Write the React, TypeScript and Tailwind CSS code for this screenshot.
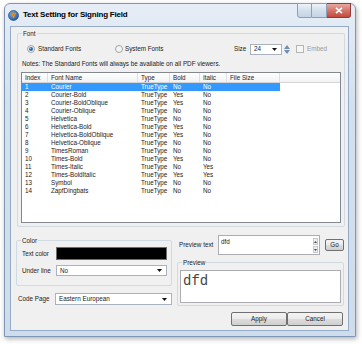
import React from 'react';

const fonts = [
  ['1', 'Courier', 'No', 'No'],
  ['2', 'Courier-Bold', 'Yes', 'No'],
  ['3', 'Courier-BoldOblique', 'Yes', 'No'],
  ['4', 'Courier-Oblique', 'No', 'No'],
  ['5', 'Helvetica', 'No', 'No'],
  ['6', 'Helvetica-Bold', 'Yes', 'No'],
  ['7', 'Helvetica-BoldOblique', 'Yes', 'No'],
  ['8', 'Helvetica-Oblique', 'No', 'No'],
  ['9', 'TimesRoman', 'No', 'No'],
  ['10', 'Times-Bold', 'Yes', 'No'],
  ['11', 'Times-Italic', 'No', 'Yes'],
  ['12', 'Times-BoldItalic', 'Yes', 'Yes'],
  ['13', 'Symbol', 'No', 'No'],
  ['14', 'ZapfDingbats', 'No', 'No'],
];

function DownArrow() {
  return (
    <svg width="5" height="3" viewBox="0 0 5 3" className="shrink-0">
      <polygon points="0,0 5,0 2.5,3" fill="#111" />
    </svg>
  );
}

function Radio({ on }: { on?: boolean }) {
  return (
    <svg width="8" height="8" viewBox="0 0 8 8" className="shrink-0">
      <circle cx="4" cy="4" r="3.5" fill="#f4f4f4" stroke="#8e8f8f" strokeWidth="0.8" />
      {on && <circle cx="4" cy="4" r="2" fill="#2d64a8" />}
      {on && <circle cx="3.4" cy="3.4" r="0.8" fill="#8fc1f0" />}
    </svg>
  );
}

function Combo({ text, className }: { text: string; className: string }) {
  return (
    <div className={`flex items-center justify-between border border-[#a9b3bf] bg-white pl-[3px] pr-[4px] ${className}`}>
      <span>{text}</span>
      <DownArrow />
    </div>
  );
}

function Btn({ label, className }: { label: string; className: string }) {
  return (
    <div
      className={`flex items-center justify-center rounded-[2px] border border-[#707070] bg-[linear-gradient(#f3f3f3_0%,#ebebeb_50%,#dddddd_51%,#cfcfcf_100%)] ${className}`}
    >
      {label}
    </div>
  );
}

function GroupLabel({ text }: { text: string }) {
  return (
    <span className="absolute left-[4px] top-[-5px] bg-[#f0f0f0] px-[1px] leading-[9px]">{text}</span>
  );
}

export default function App() {
  return (
    <div className="h-[344px] w-[362px] overflow-hidden bg-white pl-[4px] pt-[3px] font-['Liberation_Sans',Arial,sans-serif] text-[6.3px] text-[#222]">
      <div className="relative flex h-[334px] w-[352px] flex-col rounded-t-[6px] border border-[#7d97b5] bg-[linear-gradient(#e6edf6,#d3e0ef_30%,#cfdcec)] shadow-[1px_2px_5px_rgba(0,0,0,0.3)]">
        {/* title bar */}
        <div className="flex h-[22px] shrink-0 items-center pl-[3px]">
          <svg width="11" height="11" viewBox="0 0 11 11">
            <defs>
              <radialGradient id="ig" cx="0.4" cy="0.35" r="0.7">
                <stop offset="0" stopColor="#7fb6f0" />
                <stop offset="1" stopColor="#1c4f9c" />
              </radialGradient>
            </defs>
            <circle cx="5.5" cy="5.5" r="5" fill="url(#ig)" stroke="#173f7a" strokeWidth="0.6" />
            <path d="M3 2.6 L5.6 8.6 L8.2 2.6 L6.9 2.6 L5.6 6 L4.3 2.6 Z" fill="#f5a623" stroke="#b86a0c" strokeWidth="0.4" />
          </svg>
          <span className="ml-[4px] text-[8px] font-bold tracking-[-0.2px] text-black">Text Setting for Signing Field</span>
        </div>
        <div className="absolute right-[4px] top-[-1px] flex">
          <div className="h-[15px] w-[15px] rounded-bl-[3px] border border-[#8ba0b8] bg-[linear-gradient(#eef3f9,#d3dfec_50%,#c4d3e4)]" />
          <div className="h-[15px] w-[15px] border border-l-0 border-[#8ba0b8] bg-[linear-gradient(#eef3f9,#d3dfec_50%,#c4d3e4)]" />
          <div className="flex h-[15px] w-[24px] items-center justify-center rounded-br-[3px] border border-l-0 border-[#8e3e38] bg-[linear-gradient(#e8a9a1,#d4756b_50%,#c4483d)]">
            <svg width="8" height="7" viewBox="0 0 8 7">
              <path d="M1 0.8 L7 6.2 M7 0.8 L1 6.2" stroke="#fff" strokeWidth="1.6" />
            </svg>
          </div>
        </div>

        {/* client */}
        <div className="ml-[5px] flex h-[305px] w-[339px] flex-col border border-[#93abc6] bg-[#f0f0f0]">
          {/* Font group */}
          <div className="relative ml-[6px] mt-[6px] flex h-[194px] w-[328px] flex-col rounded-[2px] border border-[#d0dae3]">
            <GroupLabel text="Font" />
            <div className="mt-[9px] flex h-[12px] items-center pl-[9px]">
              <div className="flex w-[88px] items-center gap-[3px]">
                <Radio on />
                <span>Standard Fonts</span>
              </div>
              <div className="flex w-[119px] items-center gap-[2px]">
                <Radio />
                <span>System Fonts</span>
              </div>
              <span className="w-[16px]">Size</span>
              <Combo text="24" className="h-[11px] w-[32px]" />
              <div className="ml-[1px] flex h-[11px] w-[8px] flex-col items-center justify-between py-[1px]">
                <svg width="6" height="4" viewBox="0 0 6 4">
                  <polygon points="3,0 6,4 0,4" fill="#6f8db5" />
                </svg>
                <svg width="6" height="4" viewBox="0 0 6 4">
                  <polygon points="0,0 6,0 3,4" fill="#6f8db5" />
                </svg>
              </div>
              <div className="ml-[5px] h-[8px] w-[8px] border border-[#b5b5b5] bg-[#f6f6f6]" />
              <span className="ml-[3px] text-[#9a9a9a]">Embed</span>
            </div>
            <div className="mt-[4px] h-[9px] pl-[4px] leading-[9px]">
              Notes: The Standard Fonts will always be available on all PDF viewers.
            </div>
            {/* list */}
            <div className="ml-[3px] mt-[4px] h-[151px] w-[320px] border border-[#828790] bg-white">
              <div className="flex h-[10px] border-b border-[#d5d5d5] bg-[linear-gradient(#ffffff,#f1f2f4)] leading-[10px]">
                <div className="w-[26px] border-r border-[#dde1e6] pl-[3px]">Index</div>
                <div className="w-[90px] border-r border-[#dde1e6] pl-[3px]">Font Name</div>
                <div className="w-[32px] border-r border-[#dde1e6] pl-[3px]">Type</div>
                <div className="w-[30px] border-r border-[#dde1e6] pl-[3px]">Bold</div>
                <div className="w-[27px] border-r border-[#dde1e6] pl-[3px]">Italic</div>
                <div className="w-[53px] border-r border-[#dde1e6] pl-[3px]">File Size</div>
                <div className="flex-1" />
              </div>
              {fonts.map(([idx, name, bold, italic], i) => (
                <div key={idx} className="flex h-[8px] leading-[8px]">
                  <div className={`flex w-[258px] ${i === 0 ? 'bg-[#3399ff] text-white' : ''}`}>
                    <div className="w-[26px] pl-[3px]">{idx}</div>
                    <div className="w-[90px] pl-[3px]">{name}</div>
                    <div className="w-[32px] pl-[3px]">TrueType</div>
                    <div className="w-[30px] pl-[3px]">{bold}</div>
                    <div className="w-[27px] pl-[3px]">{italic}</div>
                    <div className="w-[53px]" />
                  </div>
                </div>
              ))}
            </div>
          </div>

          {/* bottom section */}
          <div className="ml-[5px] flex">
            <div className="mt-[13px] flex w-[156px] flex-col">
              <div className="relative flex h-[46px] flex-col rounded-[2px] border border-[#d0dae3]">
                <GroupLabel text="Color" />
                <div className="mt-[6px] flex h-[13px] items-center">
                  <span className="w-[39px] pl-[5px]">Text color</span>
                  <div className="h-[13px] w-[111px] border border-[#6d6d6d] bg-black" />
                </div>
                <div className="mt-[5px] flex h-[11px] items-center">
                  <span className="w-[39px] pl-[5px]">Under line</span>
                  <Combo text="No" className="h-[11px] w-[111px]" />
                </div>
              </div>
              <div className="mt-[7px] flex h-[12px] items-center">
                <span className="w-[39px] pl-[2px]">Code Page</span>
                <Combo text="Eastern European" className="h-[12px] w-[117px]" />
              </div>
            </div>

            <div className="ml-[5px] mt-[8px] flex w-[167px] flex-col">
              <div className="flex h-[20px] items-center">
                <span className="w-[41px] pl-[2px]">Preview text</span>
                <div className="flex h-[20px] w-[102px] justify-between border border-[#abadb3] bg-white pl-[2px] pt-[1px]">
                  <span className="leading-[9px]">dfd</span>
                  <div className="flex w-[7px] flex-col gap-[1px] p-[1px]">
                    <div className="flex h-[7px] items-center justify-center border border-[#c5c9cf] bg-[#eef0f3]">
                      <svg width="3" height="2" viewBox="0 0 3 2">
                        <polygon points="1.5,0 3,2 0,2" fill="#444" />
                      </svg>
                    </div>
                    <div className="flex h-[7px] items-center justify-center border border-[#c5c9cf] bg-[#eef0f3]">
                      <svg width="3" height="2" viewBox="0 0 3 2">
                        <polygon points="0,0 3,0 1.5,2" fill="#444" />
                      </svg>
                    </div>
                  </div>
                </div>
                <Btn label="Go" className="ml-[5px] h-[12px] w-[19px]" />
              </div>
              <div className="relative mt-[7px] h-[44px] w-[167px] rounded-[2px] border border-[#d0dae3]">
                <GroupLabel text="Preview" />
                <div className="ml-[2px] mt-[7px] h-[33px] w-[161px] border border-[#abadb3] bg-white pl-[2px] pt-[3px]">
                  <span className="font-['Liberation_Mono',monospace] text-[14px] leading-[14px] text-[#444]">dfd</span>
                </div>
              </div>
              <div className="mt-[6px] flex justify-end pr-[1px]">
                <Btn label="Apply" className="h-[14px] w-[56px]" />
                <Btn label="Cancel" className="h-[14px] w-[56px]" />
              </div>
            </div>
          </div>
        </div>
      </div>
    </div>
  );
}
